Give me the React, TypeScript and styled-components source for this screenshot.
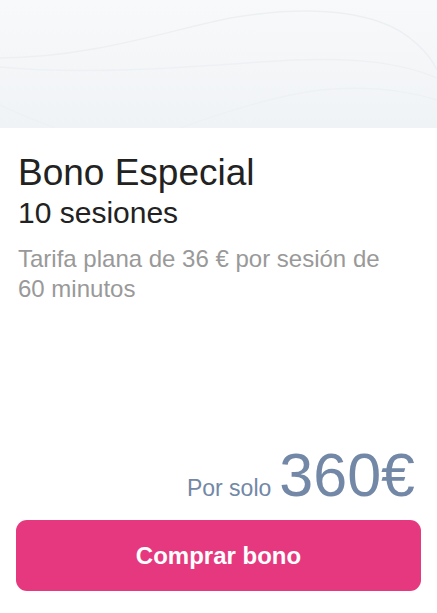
import React from 'react'
import styled, { createGlobalStyle } from 'styled-components'

const GlobalStyle = createGlobalStyle`
  html, body {
    margin: 0;
    padding: 0;
    background: #ffffff;
    font-family: "Liberation Sans", Arial, sans-serif;
  }
`

export default function App() {
  return (
    <>
      <GlobalStyle />
      <Card>
        <Header>
          <svg width="100%" height="100%" viewBox="0 0 437 128" preserveAspectRatio="none">
            <path d="M0 58 C 90 58, 170 30, 230 18 C 290 8, 340 8, 380 22 C 410 32, 430 55, 437 70" fill="none" stroke="#edf0f3" strokeWidth="1.5" />
            <path d="M0 67 C 80 75, 180 68, 260 62 C 330 57, 390 58, 437 78" fill="none" stroke="#eef1f4" strokeWidth="1.5" />
            <path d="M180 128 C 230 110, 280 95, 320 90 C 360 86, 400 88, 437 100" fill="none" stroke="#eef1f4" strokeWidth="1.5" />
            <path d="M0 105 C 20 115, 40 122, 55 128" fill="none" stroke="#eef1f4" strokeWidth="1.5" />
          </svg>
        </Header>
        <Body>
          <Title>Bono Especial</Title>
          <Subtitle>10 sesiones</Subtitle>
          <Description>Tarifa plana de 36 € por sesión de 60 minutos</Description>
          <PriceRow>
            <PriceLabel>Por solo</PriceLabel>
            <Price>360€</Price>
          </PriceRow>
          <BuyButton>Comprar bono</BuyButton>
        </Body>
      </Card>
    </>
  )
}

const Card = styled.div`
  display: flex;
  flex-direction: column;
  width: 437px;
  height: 613px;
  background: #ffffff;
`

const Header = styled.div`
  height: 128px;
  background: linear-gradient(180deg, #f8f9fa 0%, #f0f3f6 100%);
  display: flex;

  svg {
    display: block;
  }
`

const Body = styled.div`
  flex: 1;
  display: flex;
  flex-direction: column;
  padding: 23px 18px 22px 18px;
`

const Title = styled.h1`
  margin: 0;
  font-size: 37px;
  font-weight: 400;
  line-height: 44px;
  color: #222222;
`

const Subtitle = styled.h2`
  margin: 0;
  font-size: 30px;
  font-weight: 400;
  line-height: 36px;
  color: #222222;
`

const Description = styled.p`
  margin: 13px 0 0 0;
  width: 375px;
  font-size: 24px;
  line-height: 30px;
  color: #999999;
`

const PriceRow = styled.div`
  margin-top: auto;
  display: flex;
  justify-content: flex-end;
  align-items: baseline;
  gap: 8px;
  padding-right: 4px;
  color: #7288a6;
`

const PriceLabel = styled.span`
  font-size: 23px;
`

const Price = styled.span`
  font-size: 61px;
  line-height: 62px;
`

const BuyButton = styled.button`
  margin: 14px -2px 0 -2px;
  height: 71px;
  border: none;
  border-radius: 11px;
  background: #e6387e;
  color: #ffffff;
  font-family: "Liberation Sans", Arial, sans-serif;
  font-size: 24px;
  font-weight: 700;
  cursor: pointer;
`
